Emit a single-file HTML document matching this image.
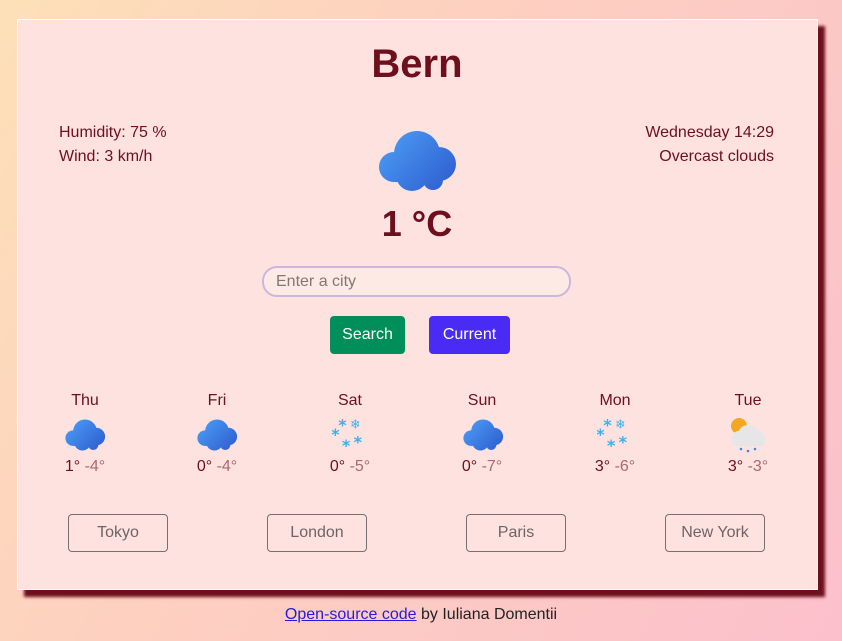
<!DOCTYPE html>
<html><head><style>
body{margin:0;width:842px;height:641px;overflow:hidden;background:linear-gradient(120deg,#fde0b8 0%,#fdd0c0 40%,#fcc0cc 100%);font-family:"Liberation Sans",sans-serif;position:relative}
.card{position:absolute;left:17px;top:19px;width:799px;height:569px;background:#fee2e0;border:1px solid #fff;box-shadow:7px 7px 3px #6d0f1c}
.a{position:absolute;color:#6d0f1c}
.t{font-size:16px}
.btn{position:absolute;border:1px solid #7a6e70;border-radius:4px;width:98px;height:36px;color:#6e6466;font-size:16px;text-align:center;line-height:36px}
.day{position:absolute;width:90px;text-align:center;font-size:16px;color:#6d0f1c}
.lo{color:#a86a70}
</style></head><body>
<svg width="0" height="0" style="position:absolute"><defs>
<linearGradient id="g" gradientUnits="userSpaceOnUse" x1="10" y1="5" x2="70" y2="60"><stop offset="0" stop-color="#4a9af5"/><stop offset="1" stop-color="#2f5fd0"/></linearGradient>
<symbol id="cl" viewBox="0 0 80 62"><g fill="url(#g)"><circle cx="17" cy="37" r="15"/><circle cx="40" cy="24" r="23"/><circle cx="62" cy="34" r="17"/><circle cx="35" cy="45" r="16"/><circle cx="56" cy="50" r="10"/><rect x="17" y="30" width="45" height="22"/></g></symbol>
<symbol id="sn" viewBox="0 0 40 36" ><g fill="#3ab0f0" font-size="18" font-weight="bold" font-family="DejaVu Sans"><text x="7" y="15">*</text><text x="20" y="13" font-size="14">❄</text><text x="-1" y="26">*</text><text x="11" y="38">*</text><text x="24" y="34">*</text></g></symbol>
</defs></svg>
<div class="card"></div>
<div class="a" style="left:0;width:834px;top:42px;text-align:center;font-size:40px;font-weight:bold">Bern</div>
<div class="a t" style="left:59px;top:121px;line-height:24px">Humidity: 75 %<br>Wind: 3 km/h</div>
<div class="a t" style="right:68px;top:121px;line-height:24px;text-align:right">Wednesday 14:29<br>Overcast clouds</div>
<svg style="position:absolute;left:376px;top:130px" width="82" height="62"><use href="#cl"/></svg>
<div class="a" style="left:0;width:834px;top:203px;text-align:center;font-size:36px;font-weight:bold">1 °C</div>
<div style="position:absolute;left:262px;top:266px;height:27px;border:2px solid #c8b8e0;border-radius:15px;background:#feeae4;color:#807878;font-size:16px;line-height:27px;padding-left:12px;width:293px">Enter a city</div>
<div style="position:absolute;left:330px;top:316px;width:75px;height:38px;background:#008f5a;border-radius:4px;color:#fff;font-size:16px;text-align:center;line-height:38px">Search</div>
<div style="position:absolute;left:429px;top:316px;width:81px;height:38px;background:#4a2af5;border-radius:4px;color:#fff;font-size:16px;text-align:center;line-height:38px">Current</div>

<div class="day" style="left:40px;top:392px">Thu</div>
<div class="day" style="left:172px;top:392px">Fri</div>
<div class="day" style="left:305px;top:392px">Sat</div>
<div class="day" style="left:437px;top:392px">Sun</div>
<div class="day" style="left:570px;top:392px">Mon</div>
<div class="day" style="left:703px;top:392px">Tue</div>
<svg style="position:absolute;left:64px;top:419px" width="42" height="32"><use href="#cl"/></svg>
<svg style="position:absolute;left:196px;top:419px" width="42" height="32"><use href="#cl"/></svg>
<svg style="position:absolute;left:332px;top:416px" width="36" height="34"><use href="#sn"/></svg>
<svg style="position:absolute;left:462px;top:419px" width="42" height="32"><use href="#cl"/></svg>
<svg style="position:absolute;left:597px;top:416px" width="36" height="34"><use href="#sn"/></svg>
<svg style="position:absolute;left:728px;top:416px" width="40" height="38"><circle cx="11" cy="10" r="8" fill="#f4a821"/><g fill="#e6e6e8"><circle cx="20" cy="19" r="10"/><circle cx="11" cy="22" r="7"/><circle cx="29" cy="22" r="8"/><rect x="4" y="22" width="33" height="8" rx="4"/></g><g fill="#3a8ae0"><circle cx="13" cy="33" r="1.3"/><circle cx="20" cy="35" r="1.3"/><circle cx="27" cy="33" r="1.3"/></g></svg>
<div class="day" style="left:40px;top:458px">1° <span class="lo">-4°</span></div>
<div class="day" style="left:172px;top:458px">0° <span class="lo">-4°</span></div>
<div class="day" style="left:305px;top:458px">0° <span class="lo">-5°</span></div>
<div class="day" style="left:437px;top:458px">0° <span class="lo">-7°</span></div>
<div class="day" style="left:570px;top:458px">3° <span class="lo">-6°</span></div>
<div class="day" style="left:703px;top:458px">3° <span class="lo">-3°</span></div>

<div class="btn" style="left:68px;top:514px">Tokyo</div>
<div class="btn" style="left:267px;top:514px">London</div>
<div class="btn" style="left:466px;top:514px">Paris</div>
<div class="btn" style="left:665px;top:514px">New York</div>
<div style="position:absolute;left:0;width:842px;top:606px;text-align:center;font-size:16px;color:#222"><span style="color:#2a1ae0;text-decoration:underline">Open-source code</span> by Iuliana Domentii</div>
</body></html>
